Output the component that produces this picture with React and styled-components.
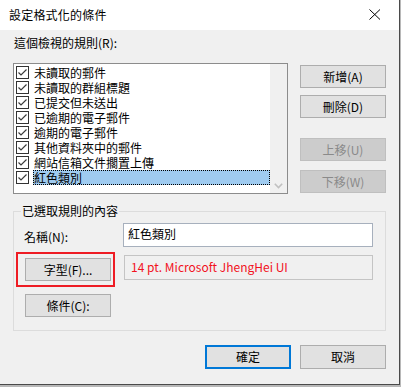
import styled, { createGlobalStyle } from 'styled-components';

const GlobalStyle = createGlobalStyle`
    html, body {
        margin: 0;
        padding: 0;
        background: #b8b8b8;
    }
    body {
        font-family: "Noto Sans CJK TC", "Liberation Sans", sans-serif;
        font-size: 12px;
        color: #000;
    }
`;

const Window = styled.div`
    width: 400px;
    height: 385px;
    box-sizing: border-box;
    border-right: 1px solid #4a4a4a;
    border-bottom: 1px solid #4a4a4a;
    background: #f0f0f0;
    display: flex;
    flex-direction: column;
`;

const TitleBar = styled.div`
    height: 30px;
    background: #fff;
    display: flex;
    align-items: center;
    justify-content: space-between;
    padding-left: 9px;
    flex-shrink: 0;
`;

const Title = styled.span`
    font-size: 12px;
    line-height: 14px;
    letter-spacing: 0.2px;
`;

const CloseBox = styled.div`
    width: 46px;
    height: 30px;
    display: flex;
    align-items: center;
    justify-content: center;
    margin-right: 1px;
    margin-top: -2px;
`;

const Body = styled.div`
    padding: 6px 13px 0 13px;
    display: flex;
    flex-direction: column;
`;

const Label = styled.div`
    line-height: 14px;
    padding-left: ${p => p.$indent || 0}px;
`;

const RuleRow = styled.div`
    display: flex;
    gap: 12px;
    margin-top: 13px;
`;

const ListBox = styled.div`
    width: 275px;
    height: 131px;
    box-sizing: border-box;
    border: 1px solid #8c8c8c;
    background: #fff;
    display: flex;
`;

const Items = styled.div`
    flex: 1;
    padding: 1px 0 0 2px;
`;

const Item = styled.div`
    height: 15px;
    display: flex;
    align-items: center;
    gap: 4px;
`;

const ItemText = styled.span`
    flex: 1;
    height: 15px;
    line-height: 15px;
    padding-left: 1px;
    box-sizing: border-box;
    background: ${p => (p.$selected ? '#9fcbf0' : 'transparent')};
    outline: ${p => (p.$selected ? '1px dotted #000' : 'none')};
    outline-offset: -1px;
`;

const ScrollTrack = styled.div`
    width: 17px;
    background: #f0f0f0;
    display: flex;
    align-items: flex-end;
    justify-content: center;
    padding-bottom: 4px;
    box-sizing: border-box;
`;

const SideButtons = styled.div`
    display: flex;
    flex-direction: column;
    padding-top: 2px;
`;

const Button = styled.button`
    width: 86px;
    height: ${p => p.$h || 23}px;
    margin-top: ${p => p.$top || 0}px;
    box-sizing: border-box;
    padding: 0;
    font-family: inherit;
    font-size: 12px;
    line-height: 14px;
    color: ${p => (p.disabled ? '#8a8a8a' : '#000')};
    background: ${p => (p.disabled ? '#cccccc' : '#e1e1e1')};
    border: ${p => (p.$default ? '2px solid #0078d7' : p.disabled ? '1px solid #bfbfbf' : '1px solid #adadad')};
    border-radius: 0;
    flex-shrink: 0;
`;

const Group = styled.fieldset`
    margin: 10px 0 0 0;
    padding: 0;
    min-width: 0;
    border: 1px solid #dcdcdc;
`;

const GroupTitle = styled.legend`
    margin-left: 7px;
    padding: 0 1px;
    line-height: 14px;
`;

const GroupGrid = styled.div`
    display: grid;
    grid-template-columns: 86px 250px;
    column-gap: 12px;
    padding: 5px 0 13px 11px;
`;

const NameInput = styled.div`
    height: 24px;
    box-sizing: border-box;
    border: 1px solid #a7b0bd;
    background: #fff;
    padding-left: 4px;
    line-height: 20px;
    font-size: 12px;
`;

const NameLabel = styled.div`
    align-self: center;
    line-height: 14px;
    margin-left: -1px;
    margin-top: 3px;
`;

const Marked = styled.div`
    position: relative;
    margin-top: ${p => p.$top || 0}px;
    height: 23px;
`;

const RedFrame = styled.div`
    position: absolute;
    left: -9px;
    right: -4px;
    top: -6px;
    bottom: -6px;
    border: 2px solid #ee1c24;
    pointer-events: none;
`;

const Preview = styled.div`
    height: 25px;
    margin-top: 8px;
    margin-left: 1px;
    box-sizing: border-box;
    border: 1px solid #c4c4c4;
    background: #f0f0f0;
    padding-left: 6px;
    line-height: 21px;
    color: #f2121e;
    font-size: 12px;
`;

const Footer = styled.div`
    display: flex;
    justify-content: flex-end;
    gap: 9px;
    margin-top: 14px;
`;

const CloseIcon = () => (
    <svg width="12" height="11" viewBox="0 0 12 11">
        <path d="M0.5 0.5 L11 10.5 M11 0.5 L0.5 10.5" stroke="#000" strokeWidth="1" fill="none" />
    </svg>
);

const CheckBox = () => (
    <svg width="13" height="13" viewBox="0 0 13 13" style={{ flexShrink: 0 }}>
        <rect x="0.5" y="0.5" width="12" height="12" fill="#fff" stroke="#333" />
        <path d="M2.5 6.5 L5 9 L10.5 3.5" stroke="#3c3c3c" strokeWidth="1.2" fill="none" />
    </svg>
);

const ChevronDown = () => (
    <svg width="9" height="6" viewBox="0 0 9 6">
        <path d="M0.8 0.8 L4.5 4.5 L8.2 0.8" stroke="#c0c0c0" strokeWidth="1.6" fill="none" />
    </svg>
);

const rules = [
    '未讀取的郵件',
    '未讀取的群組標題',
    '已提交但未送出',
    '已逾期的電子郵件',
    '逾期的電子郵件',
    '其他資料夾中的郵件',
    '網站信箱文件擱置上傳',
    '紅色類別',
];

export default function App() {
    return (
        <>
            <GlobalStyle />
            <Window>
                {/* タイトルバー */}
                <TitleBar>
                    <Title>設定格式化的條件</Title>
                    <CloseBox><CloseIcon /></CloseBox>
                </TitleBar>

                <Body>
                    <Label $indent={1}>這個檢視的規則(R):</Label>

                    {/* 規則一覧 */}
                    <RuleRow>
                        <ListBox>
                            <Items>
                                {rules.map((r, i) => (
                                    <Item key={r}>
                                        <CheckBox />
                                        <ItemText $selected={i === rules.length - 1}>{r}</ItemText>
                                    </Item>
                                ))}
                            </Items>
                            <ScrollTrack><ChevronDown /></ScrollTrack>
                        </ListBox>
                        <SideButtons>
                            <Button>新增(A)</Button>
                            <Button $top={7}>刪除(D)</Button>
                            <Button $top={20} disabled>上移(U)</Button>
                            <Button $top={9} disabled>下移(W)</Button>
                        </SideButtons>
                    </RuleRow>

                    {/* 選取規則の内容 */}
                    <Group>
                        <GroupTitle>已選取規則的內容</GroupTitle>
                        <GroupGrid>
                            <NameLabel>名稱(N):</NameLabel>
                            <NameInput>紅色類別</NameInput>

                            <Marked $top={11}>
                                <Button>字型(F)...</Button>
                                <RedFrame />
                            </Marked>
                            <Preview>14 pt. Microsoft JhengHei UI</Preview>

                            <Marked $top={13}>
                                <Button>條件(C):</Button>
                            </Marked>
                        </GroupGrid>
                    </Group>

                    <Footer>
                        <Button $h={24} $default>確定</Button>
                        <Button $h={24}>取消</Button>
                    </Footer>
                </Body>
            </Window>
        </>
    );
}
